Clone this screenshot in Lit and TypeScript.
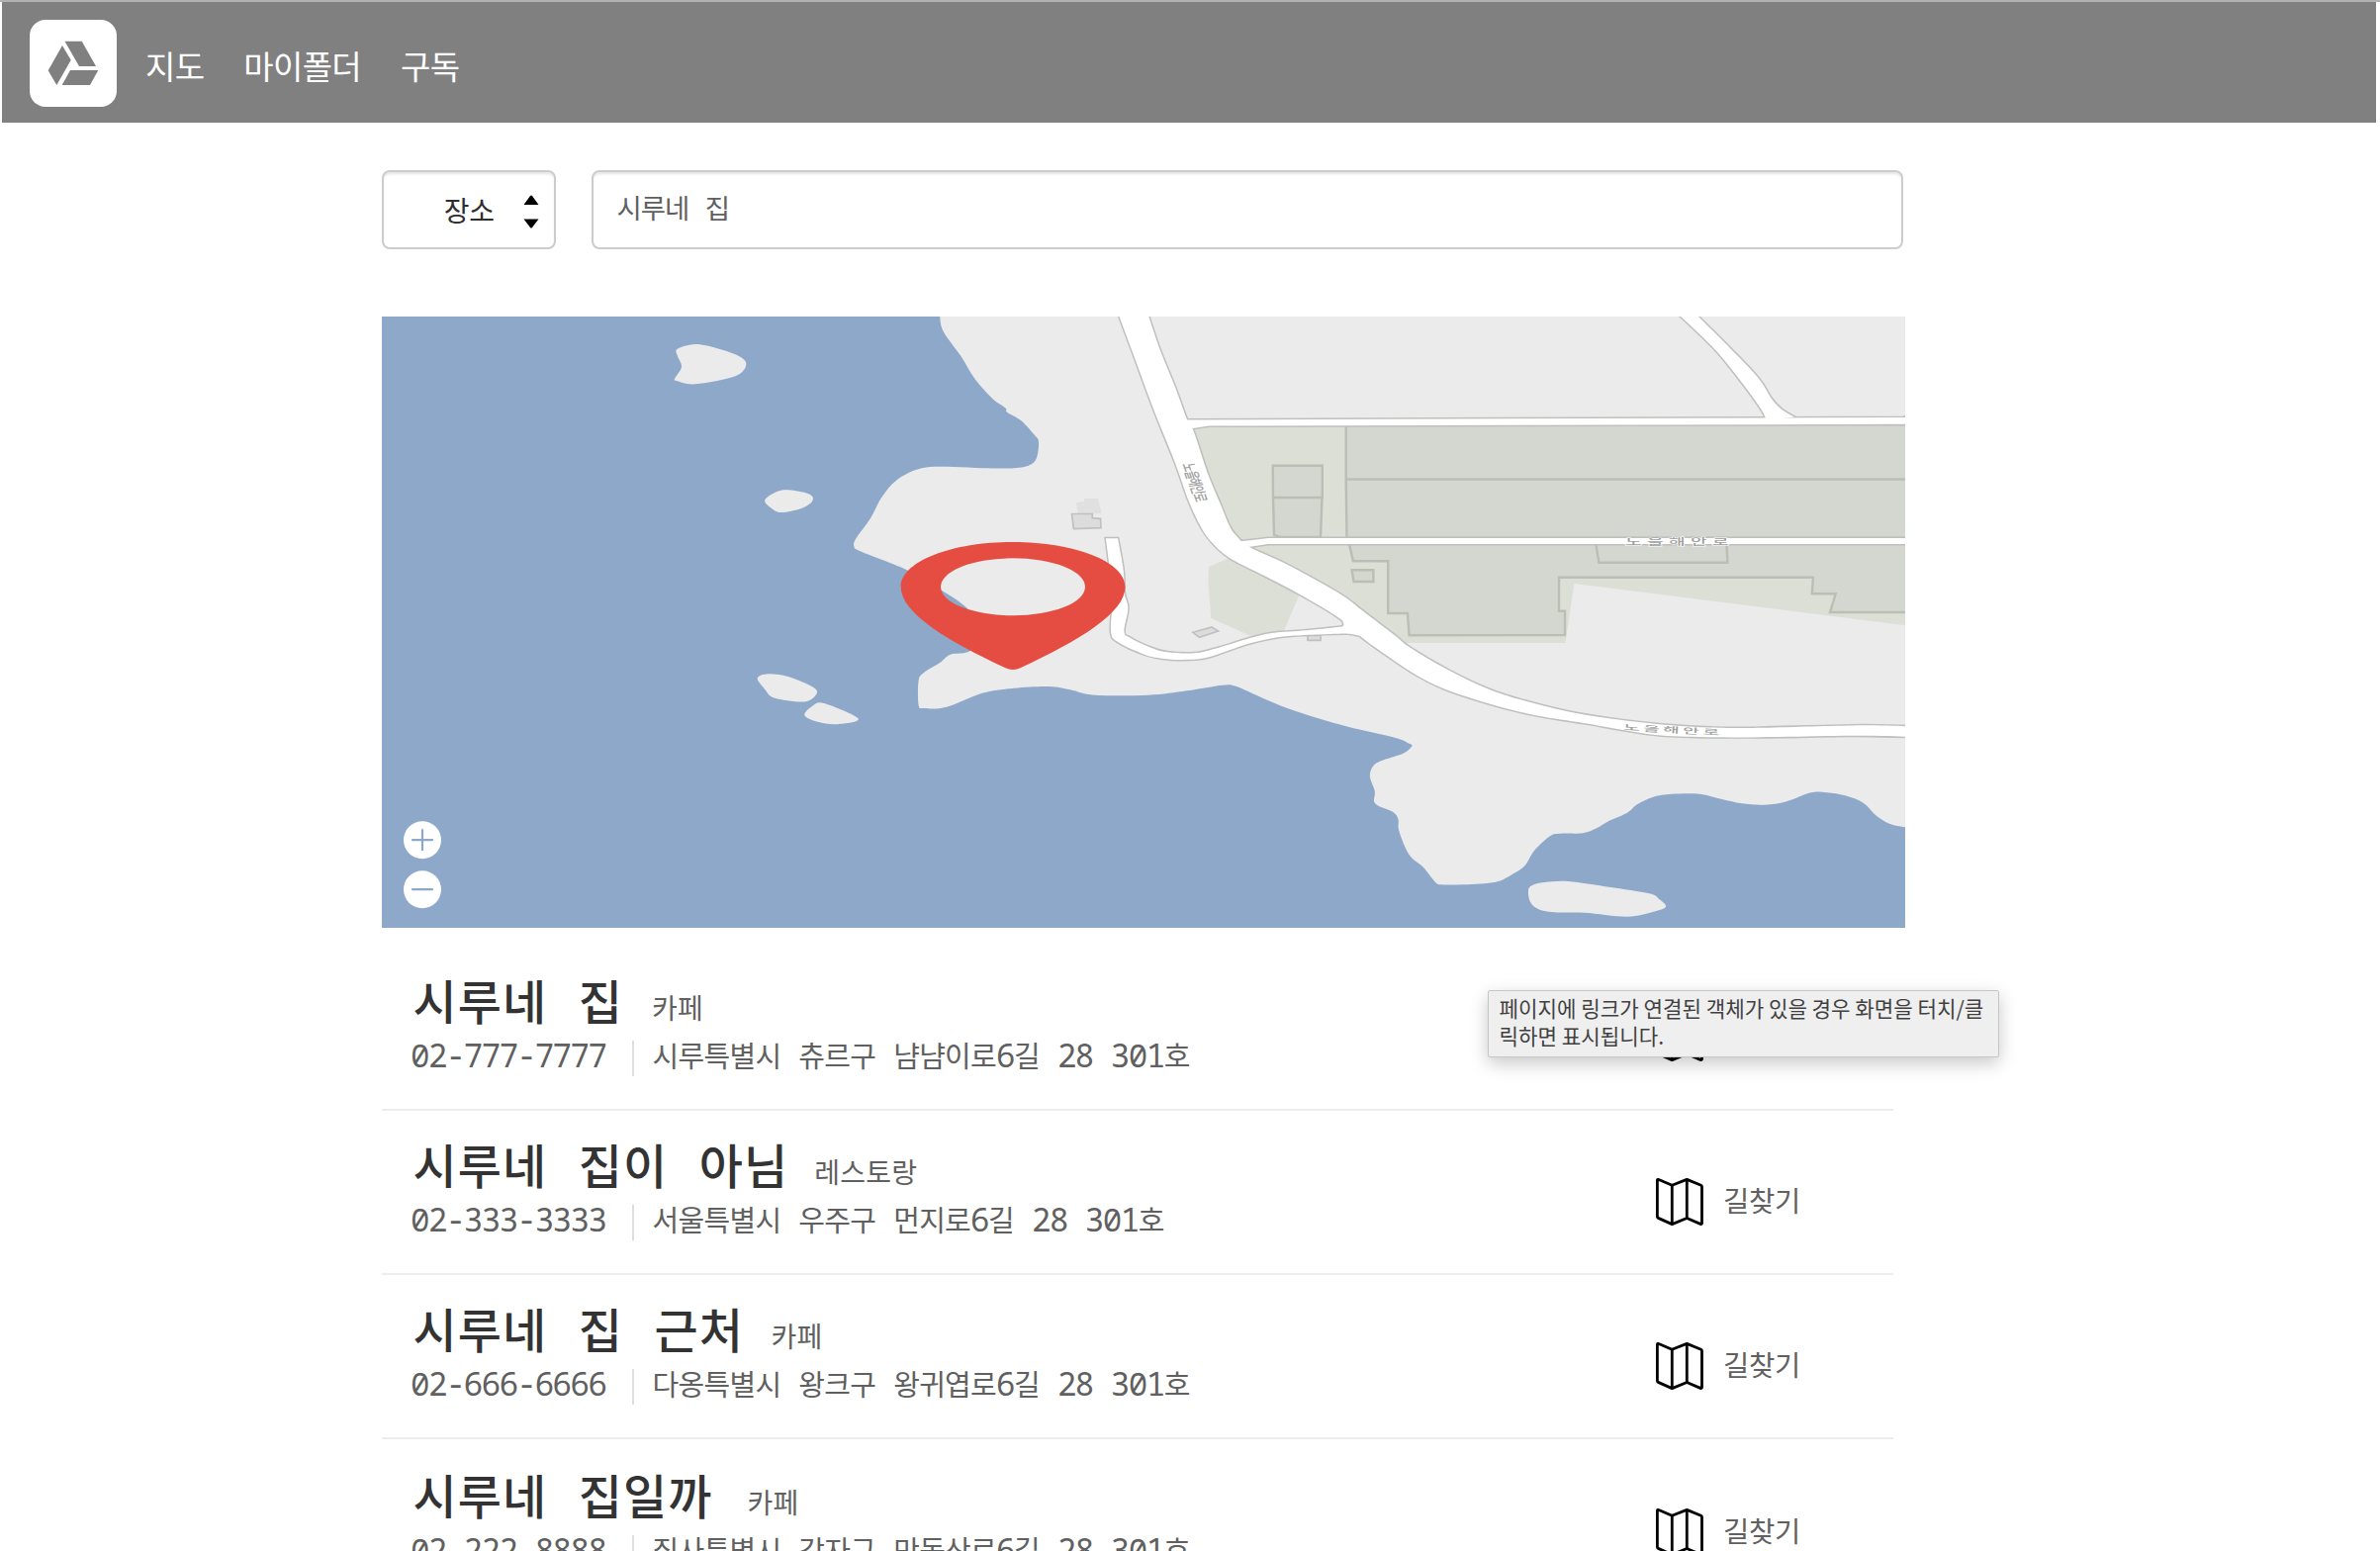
import { LitElement, html, svg, css } from 'lit';
import { customElement } from 'lit/decorators.js';

type Pt = [number, number];

interface Place {
  name: string;
  kind: string;
  kindGap: number;
  phone: string;
  address: string;
}

const PLACES: Place[] = [
  { name: '시루네 집', kind: '카페', kindGap: 29, phone: '02-777-7777', address: '시루특별시 츄르구 냠냠이로6길 28 301호' },
  { name: '시루네 집이 아님', kind: '레스토랑', kindGap: 26, phone: '02-333-3333', address: '서울특별시 우주구 먼지로6길 28 301호' },
  { name: '시루네 집 근처', kind: '카페', kindGap: 27.5, phone: '02-666-6666', address: '다옹특별시 왕크구 왕귀엽로6길 28 301호' },
  { name: '시루네 집일까', kind: '카페', kindGap: 35, phone: '02-222-8888', address: '집사특별시 감자구 만동산로6길 28 301호' },
];

/* Catmull-Rom spline through the points, as cubic segments. */
function curve(p: Pt[], closed = false, first = 'M'): string {
  const n = p.length;
  const at = (i: number): Pt => (closed ? p[(i + n) % n] : p[Math.max(0, Math.min(n - 1, i))]);
  let d = `${first}${p[0][0]} ${p[0][1]}`;
  const last = closed ? n : n - 1;
  for (let i = 0; i < last; i++) {
    const [a, b, c, e] = [at(i - 1), at(i), at(i + 1), at(i + 2)];
    d += `C${(b[0] + (c[0] - a[0]) / 6).toFixed(1)} ${(b[1] + (c[1] - a[1]) / 6).toFixed(1)} ${(c[0] - (e[0] - b[0]) / 6).toFixed(1)} ${(c[1] - (e[1] - b[1]) / 6).toFixed(1)} ${c[0]} ${c[1]}`;
  }
  return closed ? d + 'Z' : d;
}

const band = (a: Pt[], b: Pt[]) => curve(a) + curve([...b].reverse(), false, 'L') + 'Z';

const COAST: Pt[] = [
  [950, 318], [953.6, 335], [971.4, 360], [985.7, 383.3], [1003.6, 403.3], [1016.5, 412.5], [1018, 416.7], [1032, 425],
  [1046, 440], [1050, 447], [1048, 462.7], [1041, 470], [1025, 473.3], [992.9, 473.3], [964.3, 472], [932, 473.3],
  [907, 485], [891, 503.3], [880.4, 523.3], [865, 545], [863.6, 552.7], [869.6, 557.3], [917.9, 576.7], [951.8, 596.7],
  [976.8, 614], [1000, 640], [980.4, 658.3], [960.7, 661.7], [950, 670], [934, 680], [928.6, 688.3], [928.6, 712.7],
  [934, 716], [957, 714.7], [992.9, 700.7], [1025, 695.7], [1060.7, 694], [1082, 697.3], [1107, 702.7], [1160.7, 702.7],
  [1200, 698.3], [1235.7, 692.7], [1250, 694], [1278.6, 706.7], [1310, 719], [1361, 734.3], [1410, 745.7], [1424.5, 751.7],
  [1427.3, 754.3], [1418.4, 761.7], [1396, 769.3], [1387.8, 775], [1384.9, 785], [1389.8, 800], [1389, 810], [1394, 815],
  [1408, 820.7], [1413.5, 828.3], [1414.3, 840], [1424.5, 864], [1438.8, 876.7], [1451, 891.7], [1457, 894.3], [1479.6, 894.3],
  [1512, 891.7], [1528.6, 884], [1541.6, 875], [1551, 860], [1567.3, 845], [1577.6, 842.7], [1600, 842.3], [1614, 837.3],
  [1626.5, 830], [1645, 821.7], [1655, 813.3], [1671.4, 805.7], [1689.8, 802.7], [1718.4, 802.7], [1740.8, 808],
  [1761, 812.3], [1783.7, 813.7], [1806, 810.3], [1830.6, 801.3], [1847, 801.3], [1865.3, 804.3], [1883.7, 811.7],
  [1896, 824], [1910, 832.7], [1928, 836.5],
];

const ISLANDS: Pt[][] = [
  [[682, 383], [689, 371], [685, 360], [684.5, 353], [700, 348.2], [715, 349.6], [745, 359], [754.3, 368.3], [743.3, 380.3], [703.3, 388.3], [684, 385]],
  [[773.3, 505.3], [786.7, 496.4], [800, 495.6], [819, 500], [821, 506.9], [810, 514], [790, 518], [780, 514]],
  [[765.7, 685.6], [776.7, 681.2], [798.3, 684.4], [822, 694.7], [825.3, 701.7], [813.3, 709.4], [783.3, 705.7], [773.3, 696.9]],
  [[813.3, 723], [821.7, 713.4], [833.3, 711], [867.7, 726.6], [846.7, 732.2], [826.7, 729.8]],
  [[1545, 900], [1549, 895], [1561, 892], [1585.7, 891], [1626.5, 896.7], [1667.3, 903.3], [1677.6, 909.3], [1684, 916.7], [1671.4, 921.7], [1645, 926.7], [1602, 922.7], [1571.4, 922.3], [1555, 919], [1547, 911.7]],
];

const MAIN_L: Pt[] = [
  [1130, 316], [1146.4, 360], [1166, 413.3], [1187.5, 466.7], [1201.8, 506.7], [1214.3, 533.3], [1225, 548.3], [1242.9, 564],
  [1278.6, 582.3], [1313.6, 600.7], [1350, 622.3], [1373.5, 642], [1398, 660], [1430.6, 681.7], [1459, 696], [1487.8, 706],
  [1524.5, 716.7], [1561, 724.7], [1606, 731.7], [1640.8, 738], [1679.6, 743.5], [1732.7, 745.3], [1798, 745], [1871.4, 743.8], [1930, 744.7],
];
const MAIN_R: Pt[] = [
  [1160, 316], [1173.2, 355], [1187.5, 390], [1200, 424], [1206, 434], [1221.4, 480], [1233.9, 510], [1242.9, 531.7],
  [1250, 541.7], [1262.5, 552.7], [1296.4, 568.3], [1332, 587.3], [1359, 603.3], [1378.6, 618.3], [1410, 642.3], [1426, 655],
  [1464, 677.3], [1505, 696.7], [1540.7, 708.3], [1583.6, 719], [1630, 726.7], [1683.6, 732.7], [1730, 735.6], [1772.9, 735.9],
  [1872.9, 733.4], [1930, 734.2],
];
const LANE_L: Pt[] = [
  [1117.9, 544.3], [1122, 576.7], [1125, 603.3], [1123, 638.3], [1130.4, 649.3], [1157, 661.7], [1175, 665.7], [1194.6, 667],
  [1217.9, 665.3], [1242.9, 657.3], [1267.9, 649.3], [1300, 643.3], [1350, 640.7], [1364, 640.7], [1376, 643],
];
const LANE_R: Pt[] = [
  [1130, 544.3], [1135.7, 576.7], [1136.8, 600], [1140.4, 615], [1136.4, 638.3], [1142.9, 645], [1164, 655], [1180, 659.3],
  [1207, 660.3], [1228.6, 655.7], [1260.7, 646], [1285.7, 640], [1321, 637.3], [1350, 634.3], [1358, 632.5], [1357, 627],
];
const SPUR_L: Pt[] = [[1695, 316], [1733.6, 353.3], [1762, 388.3], [1780, 413.3], [1786, 425]];
const SPUR_R: Pt[] = [[1713, 316], [1772.9, 376.7], [1790.7, 402.7], [1801.4, 414], [1814, 421.6]];

const ROADS: string[] = [
  'M1196 424.4L1926 422V428.8L1222 430.5L1206 433Z M1926 421.6H1934V429H1926Z',
  'M1252 547.5L1282 544H1934V550H1282L1262 553Z',
  band(MAIN_L, MAIN_R),
  band(LANE_L, LANE_R),
  band(SPUR_L, SPUR_R),
];

@customElement('place-map')
export class PlaceMap extends LitElement {
  static styles = css`
    :host { display: block; height: 618px; }
    svg { display: block; width: 1540px; height: 618px; }
    .sea { fill: #8ea8c9; }
    .land { fill: #ebebeb; }
    .field { fill: #dcdfd6; }
    .hall { fill: #d4d7cf; stroke: #babeb5; stroke-width: 2.4; }
    .house { fill: #dcdcdc; stroke: #c0c0c0; stroke-width: 1.7; }
    .shed { fill: #e0e0e0; }
    .edge { fill: none; stroke: #bfbfbd; stroke-width: 3; }
    .road { fill: #fff; }
    .label { font: 500 9.5px "Noto Sans CJK KR", sans-serif; fill: #a0a0a0; }
    .halo { stroke: #fff; stroke-width: 1px; paint-order: stroke; }
    .pin { fill: #e64d42; }
    .knob { fill: #fff; }
    .sign { stroke: #8ea8c9; stroke-width: 2.2; stroke-linecap: round; }
  `;

  render() {
    return html`
      <svg viewBox="386 320 1540 618">
        <rect class="sea" x="386" y="320" width="1540" height="618"></rect>
        <path class="land" d="${curve(COAST)}V316H950Z"></path>
        ${ISLANDS.map((i) => svg`<path class="land" d="${curve(i, true)}"></path>`)}
        <path class="field" d="M1195 428H1928V632.5L1591.4 590L1582.5 650H1415L1320 590L1240 550Z"></path>
        <path class="field" d="M1222 573L1243 564L1260 560L1313.6 601L1296.4 641L1268 644.5L1224.3 625L1221.4 587Z"></path>
        <path class="hall" d="M1360.7 428H1934V484.5H1360.7ZM1360.7 484.5H1934V544H1361.5ZM1286.8 470.7H1336.8V503H1287ZM1287 503H1336.5L1335 543H1294L1288 541Z"></path>
        <path class="hall" d="M1363.6 548L1367.9 567.3H1403.2V620H1422.9L1424.6 642.3L1582 642V617.7H1576V583.7H1832.9L1831.8 600.3H1855.7L1850 619H1934V548ZM1613 548L1616.4 568.7H1746.4L1745.4 548M1366.6 576.3H1388.4V588H1368.5Z"></path>
        <path class="shed" d="M1087.9 508.3L1096 507V504H1110L1113.6 519.3H1090Z"></path>
        <path class="house" d="M1083.5 519.5H1104.3V523.7L1112.5 524.3L1113 533.7L1085.4 534.7ZM1206 639.3L1225 634L1231.4 638L1212.5 644.3ZM1322 642.3H1335V647.3H1322Z"></path>
        ${ROADS.map((d) => svg`<path class="edge" d="${d}"></path>`)}
        ${ROADS.map((d) => svg`<path class="road" d="${d}"></path>`)}
        <text class="label" transform="translate(1195 469) scale(1.7 1) rotate(78)" textLength="40">노을해안로</text>
        <text class="label halo" transform="translate(1643 550.5) scale(1.9 0.9)" textLength="55">노을해안로</text>
        <text class="label" transform="translate(1641 738) rotate(3.3) scale(1.9 0.85)" textLength="51">노을해안로</text>
        <path class="pin" fill-rule="evenodd" d="M910.7 593.3C910.7 568 961 548 1024 548S1137.5 568 1137.5 593.3C1137.5 620 1090 648 1032 675Q1024 679 1016 675C958 648 910.7 620 910.7 593.3ZM951 593.3A73 29 0 0 0 1097 593.3A73 29 0 0 0 951 593.3Z"></path>
        <circle class="knob" cx="427" cy="849.2" r="19"></circle>
        <path class="sign" d="M417 849.2H437M427 839.2V859.2"></path>
        <circle class="knob" cx="427" cy="899.2" r="19"></circle>
        <path class="sign" d="M417 899.2H437"></path>
      </svg>
    `;
  }
}

@customElement('app-root')
export class AppRoot extends LitElement {
  static styles = css`
    :host {
      display: block; height: 1568px; overflow: hidden; background: #fff;
      font-family: "Noto Sans CJK KR", sans-serif; color: #606060;
    }
    .strip { height: 2px; background: #b2b2b2; }
    .bar { height: 122px; width: 2400px; margin-left: 2px; background: #808080; display: flex; align-items: center; box-sizing: border-box; padding: 2px 0 0 28px; }
    .logo { width: 88px; height: 88px; display: block; }
    .nav { display: flex; gap: 40px; margin-left: 29px; padding-top: 3px; font-size: 33px; line-height: 40px; letter-spacing: -0.7px; color: #fff; }
    .main { width: 1540px; margin-left: 386px; padding-top: 48px; }
    .search { display: flex; gap: 36px; height: 80px; margin-bottom: 68px; }
    .select, .field {
      box-sizing: border-box; border: 2px solid #ccc; border-radius: 8px; height: 80px;
      display: flex; align-items: center; box-shadow: inset 0 3px 3px -1px #e4e4e4;
    }
    .select { width: 176px; justify-content: flex-end; padding-right: 15.5px; gap: 29px; font-size: 28px; line-height: 40px; letter-spacing: -0.4px; color: #2e2e2e; }
    .arrows { width: 16px; height: 34px; display: block; margin-top: 4px; }
    .field { width: 1326px; padding: 0 0 6px 23.5px; font-size: 27.5px; line-height: 40px; letter-spacing: -1px; word-spacing: 11.2px; }
    .list { width: 1528px; margin-top: 19px; }
    .row { display: flex; height: 166px; box-sizing: border-box; border-bottom: 2px solid #ededed; }
    .row.last { padding-top: 2px; }
    .about { flex: 1; padding: 27.5px 0 0 29px; }
    .head { display: flex; align-items: baseline; height: 50px; padding-left: 2.5px; }
    .name { font-size: 48px; line-height: 50px; font-weight: 500; letter-spacing: 1.1px; word-spacing: 19.6px; color: #333; white-space: nowrap; }
    .kind { font-size: 28px; line-height: 40px; letter-spacing: 0.2px; position: relative; top: -1px; }
    .info { display: flex; align-items: flex-start; height: 36px; margin-top: 17.5px; line-height: 36px; white-space: pre; }
    .num { font: 32.5px/36px "Noto Sans Mono", monospace; font-feature-settings: "zero"; letter-spacing: -1.55px; }
    .phone { width: 224px; margin-top: -2.6px; }
    .rule { width: 2px; height: 36px; background: #dedede; margin-right: 18.6px; }
    .address { margin-top: -4px; }
    .han { font: 29px/36px "Noto Sans CJK KR", sans-serif; letter-spacing: -0.72px; }
    .action { width: 240px; position: relative; display: flex; align-items: flex-start; padding-top: 67.7px; gap: 20px; }
    .way { width: 48px; height: 48px; flex: none; display: block; }
    .go { font-size: 28.6px; line-height: 40px; letter-spacing: -0.3px; margin-top: 2.4px; }
    .tip {
      position: absolute; left: -170.5px; top: 44px; width: 517px; height: 67.5px; box-sizing: border-box;
      background: #efefef; border: 1px solid #c6c6c6; padding: 2.5px 0 0 11px; border-radius: 2px;
      box-shadow: 0 6px 18px rgba(0, 0, 0, 0.22); font-size: 21.2px; line-height: 28px; color: #404040; white-space: nowrap;
    }
  `;

  private address(text: string) {
    const runs = text.match(/[가-힣]+|[^가-힣]+/g) ?? [];
    return runs.map((r) => html`<span class=${/[가-힣]/.test(r) ? 'han' : 'num'}>${r}</span>`);
  }

  private row(p: Place, i: number) {
    return html`
      <div class="row ${i === 3 ? 'last' : ''}">
        <div class="about">
          <div class="head">
            <div class="name">${p.name}</div>
            <div class="kind" style="margin-left:${p.kindGap}px">${p.kind}</div>
          </div>
          <div class="info"><span class="num phone">${p.phone}</span><span class="rule"></span><span class="num address">${this.address(p.address)}</span></div>
        </div>
        <div class="action">
          <svg class="way" viewBox="0 0 48 48" fill="none" stroke="#000" stroke-width="2.8" stroke-linejoin="round">
            <path d="M1.4 2.4Q1.4 1 2.8 1.5L16.3 7.3L31.3 1.4L45.6 7.3Q46.5 7.7 46.5 8.7V45.4Q46.5 47 45 46.4L31.3 40.5L16.3 46.6L2.3 40.4Q1.4 40 1.4 39Z"></path>
            <path d="M16.3 7.3V46.6M31.3 1.4V40.5"></path>
          </svg>
          ${i === 0
            ? html`<div class="tip">페이지에 링크가 연결된 객체가 있을 경우 화면을 터치/클<br>릭하면 표시됩니다.</div>`
            : html`<div class="go">길찾기</div>`}
        </div>
      </div>
    `;
  }

  render() {
    return html`
      <div class="strip"></div>
      <div class="bar">
        <svg class="logo" viewBox="30 20 88 88">
          <rect x="30" y="20" width="88" height="88" rx="16" fill="#fff"></rect>
          <path fill="#808080" d="M65.5 41.8H82.7L97 67H80ZM63 46L71.7 60.7L57.3 86L48.7 71.3ZM71 71H99.3L91 86H62.7Z"></path>
        </svg>
        <div class="nav"><span>지도</span><span>마이폴더</span><span>구독</span></div>
      </div>
      <div class="main">
        <div class="search">
          <div class="select">
            <span>장소</span>
            <svg class="arrows" viewBox="0 0 16 34"><path d="M0.5 10L7 1Q8 0 9 1L15.5 10ZM0.5 24.5H15.5L9 33Q8 34 7 33Z"></path></svg>
          </div>
          <div class="field">시루네 집</div>
        </div>
        <place-map></place-map>
        <div class="list">${PLACES.map((p, i) => this.row(p, i))}</div>
      </div>
    `;
  }
}
